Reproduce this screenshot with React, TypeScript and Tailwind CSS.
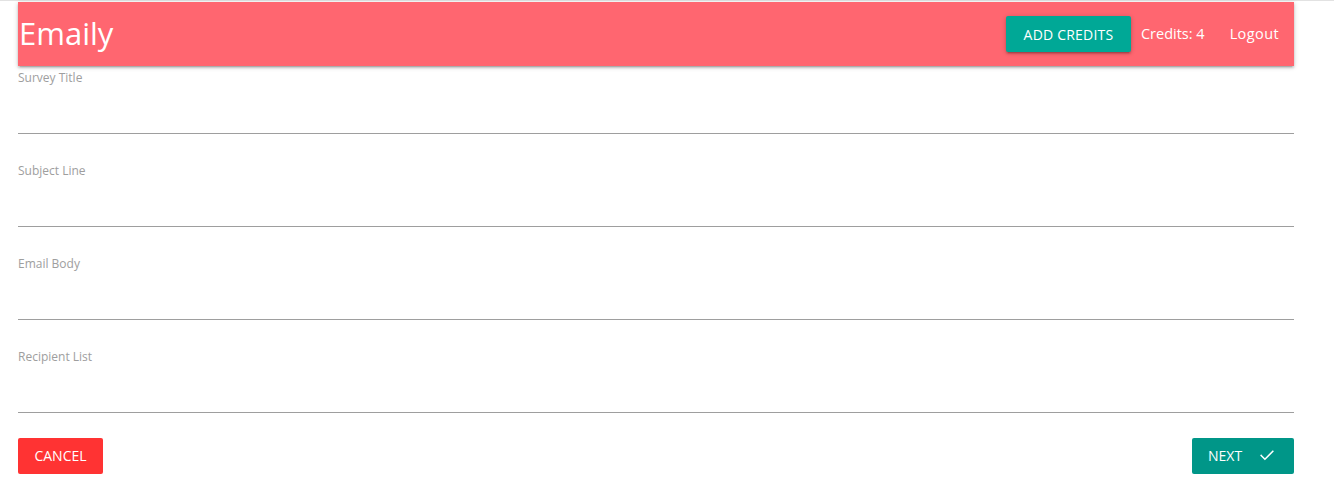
import React from "react";

const font = { fontFamily: '"Open Sans", "Noto Sans", sans-serif' };

function Field({ label }: { label: string }) {
  return (
    <div className="mb-[25px]">
      <label className="block h-[19px] pt-[4px] text-[12px] leading-[15px] text-[#9e9e9e]">{label}</label>
      <div className="h-[49px] border-b border-[#9e9e9e]" />
    </div>
  );
}

export default function App() {
  return (
    <div className="min-h-[497px] bg-white" style={font}>
      <div className="h-[2px] border-t border-[#e2e2e2]" />
      <div className="ml-[18px] w-[1276px]">
        <nav className="flex h-[64px] items-center justify-between bg-[#ff6670] shadow-[0_2px_2px_0_rgba(0,0,0,0.14),0_3px_1px_-2px_rgba(0,0,0,0.12),0_1px_5px_0_rgba(0,0,0,0.2)]">
          <a className="-mt-[3px] ml-[1px] text-[31px] leading-[64px] text-white">Emaily</a>
          <ul className="flex items-center text-[14.5px] text-white">
            <li>
              <button className="h-[36px] w-[125px] rounded-[2px] bg-[#00a896] text-[14px] uppercase tracking-[0.2px] text-white shadow-[0_2px_2px_0_rgba(0,0,0,0.14),0_3px_1px_-2px_rgba(0,0,0,0.12),0_1px_5px_0_rgba(0,0,0,0.2)]">
                Add Credits
              </button>
            </li>
            <li className="mx-[10px]">Credits: 4</li>
            <li className="px-[15px] tracking-[0.4px]">Logout</li>
          </ul>
        </nav>
        <form>
          <Field label="Survey Title" />
          <Field label="Subject Line" />
          <Field label="Email Body" />
          <Field label="Recipient List" />
          <div className="flex justify-between">
            <button type="button" className="h-[36px] w-[85px] rounded-[2px] bg-[#ff3333] pb-[2px] text-[14px] uppercase text-white">
              Cancel
            </button>
            <button type="button" className="flex h-[36px] w-[102px] items-center rounded-[2px] bg-[#009688] pb-[2px] pl-[16px] text-[14px] uppercase text-white">
              <span>Next</span>
              <svg className="ml-[15px]" width="20" height="20" viewBox="0 0 24 24" fill="none" stroke="white" strokeWidth="1.8" strokeLinecap="square">
                <path d="M5 12.5l4.5 4.5L19 7.5" />
              </svg>
            </button>
          </div>
        </form>
      </div>
    </div>
  );
}
